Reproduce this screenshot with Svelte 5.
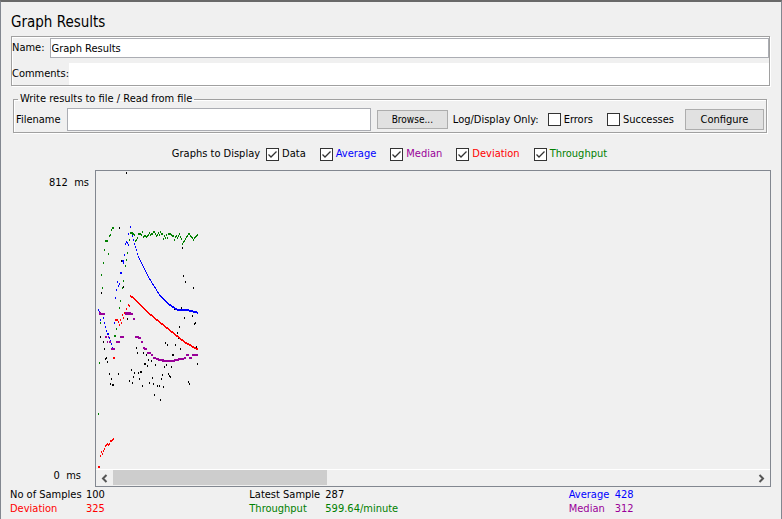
<script lang="ts">
	type Mark = [x: number, y: number, width?: number];

	interface Series {
		id: string;
		label: string;
		marks: Mark[];
	}

	// fills in one mark per pixel column between the given points
	function curve(points: Mark[]): Mark[] {
		const marks: Mark[] = [];
		for (let i = 1; i < points.length; i++) {
			const [x0, y0] = points[i - 1];
			const [x1, y1] = points[i];
			for (let x = x0; x < x1; x++) {
				marks.push([x, Math.round(y0 + ((y1 - y0) * (x - x0)) / (x1 - x0))]);
			}
		}
		return marks;
	}

	// one throughput sample per pixel column, starting at x = 48
	const throughputTail = [
		65, 65, 66, 65, 64, 62, 64, 63, 63, 61, 61, 63, 65, 64, 62, 64, 61, 63, 63, 68, 65, 67, 64, 67, 63, 63, 63,
		64, 65, 65, 69, 66, 65, 67, 65, 63, 66, 68, 73, 71, 70, 68, 66, 65, 63, 63, 65, 66, 67, 69, 67, 66, 65, 64
	];

	const series: Series[] = [
		{
			id: 'data',
			label: 'Data',
			marks: [
				[30, 2], [23, 57], [86, 77], [87, 105], [89, 111], [97, 117], [5, 122], [25, 90], [27, 116],
				[31, 148], [4, 166], [7, 171], [8, 178], [10, 187], [9, 188], [11, 191], [40, 177], [41, 182],
				[47, 182], [50, 184], [48, 193, 2], [51, 195], [35, 199], [38, 202], [42, 202], [44, 201, 2],
				[37, 206], [43, 208], [33, 210], [36, 212], [46, 215], [22, 203], [13, 203], [15, 208], [14, 213],
				[16, 214, 2], [78, 138], [85, 137], [67, 154], [88, 147], [96, 145], [99, 152], [98, 153],
				[83, 156], [81, 162], [82, 167], [92, 173], [100, 176], [69, 172], [71, 174], [79, 174], [84, 178],
				[76, 184, 2], [101, 193], [75, 196], [70, 194], [68, 196], [59, 194], [55, 190], [52, 189],
				[72, 203], [73, 205], [74, 206], [65, 208], [66, 204], [56, 207], [53, 212], [57, 213], [61, 215],
				[63, 215], [67, 216], [58, 224], [64, 229], [92, 211], [93, 213]
			]
		},
		{
			id: 'average',
			label: 'Average',
			marks: [
				[34, 56], [32, 63], [36, 65], [37, 69], [30, 71], [29, 73], [31, 72], [32, 74], [28, 84],
				[26, 90, 2], [27, 92], [24, 102, 2], [21, 111], [23, 113], [22, 115], [20, 119], [19, 127],
				[2, 139], [3, 141], [7, 147], [4, 149], [8, 152], [9, 156], [10, 160], [11, 163, 2], [13, 167],
				[14, 170], [15, 173], [16, 177], [18, 152],
				...curve([
					[38, 73], [40, 79], [41, 83], [43, 88], [45, 92], [47, 96], [49, 100], [51, 104], [55, 111],
					[60, 119], [63, 124], [66, 127], [69, 130], [72, 133], [75, 135], [78, 137], [82, 139],
					[91, 139], [95, 140], [99, 141], [102, 142]
				])
			]
		},
		{
			id: 'median',
			label: 'Median',
			marks: [
				[3, 142, 2], [3, 143, 6], [28, 142, 7], [29, 143, 8], [37, 148, 2], [9, 166, 2], [12, 166],
				[13, 171, 2], [11, 171], [15, 178, 4], [24, 166, 4], [20, 171, 4], [39, 166, 4], [42, 167, 3],
				[45, 171, 2], [47, 177, 2], [48, 178, 3], [51, 182, 4], [55, 184, 2], [57, 187, 3], [60, 188, 3],
				[62, 189, 6], [66, 190, 10], [76, 190, 3], [78, 189, 5], [82, 188, 4], [86, 188, 2], [88, 187, 2],
				[90, 184, 3], [93, 187, 3], [96, 184, 6]
			]
		},
		{
			id: 'deviation',
			label: 'Deviation',
			marks: [
				[30, 138], [32, 134], [33, 135], [28, 142], [26, 144], [27, 147], [24, 149], [19, 149, 3],
				[22, 151], [25, 152], [23, 154], [17, 187, 2], [2, 296, 2], [4, 285], [5, 281], [6, 283], [7, 280],
				[8, 278], [9, 275], [10, 274], [11, 273], [12, 274], [13, 273], [14, 270], [15, 270], [16, 269],
				[17, 268],
				...curve([[34, 125], [36, 126], [51, 141], [63, 151], [78, 163], [88, 171], [102, 179]])
			]
		},
		{
			id: 'throughput',
			label: 'Throughput',
			marks: [
				[16, 57, 2], [15, 59], [14, 64], [13, 65], [9, 70, 3], [8, 79], [12, 83], [7, 92], [5, 104],
				[6, 117], [34, 62, 3], [36, 63], [37, 63], [38, 64], [33, 69], [41, 67], [40, 69], [39, 70],
				[42, 63, 3], [45, 64], [46, 61], [47, 66], [31, 82], [30, 89], [29, 95], [27, 110], [26, 117],
				[24, 130], [23, 137], [4, 152], [20, 158], [18, 165, 2], [3, 192], [2, 243],
				...throughputTail.map((y, i): Mark => [48 + i, y])
			]
		}
	];

	const stats = [
		{ id: 'data', label: 'No of Samples', value: '100' },
		{ id: 'data', label: 'Latest Sample', value: '287' },
		{ id: 'average', label: 'Average', value: '428' },
		{ id: 'deviation', label: 'Deviation', value: '325' },
		{ id: 'throughput', label: 'Throughput', value: '599.64/minute' },
		{ id: 'median', label: 'Median', value: '312' }
	];

	let name = $state('Graph Results');
	let comments = $state('');
	let filename = $state('');
	let errorsOnly = $state(false);
	let successesOnly = $state(false);
	let visible: Record<string, boolean> = $state({
		data: true,
		average: true,
		median: true,
		deviation: true,
		throughput: true
	});
</script>

<main class="panel">
	<h1>Graph Results</h1>

	<div class="naming etched">
		<div class="field">
			<label for="name">Name:</label>
			<input id="name" class="name" type="text" bind:value={name} />
		</div>
		<div class="field">
			<label for="comments">Comments:</label>
			<input id="comments" class="comments" type="text" bind:value={comments} />
		</div>
	</div>

	<fieldset class="etched">
		<legend>Write results to file / Read from file</legend>
		<div class="file">
			<label for="filename">Filename</label>
			<input id="filename" class="filename" type="text" bind:value={filename} />
			<button type="button" class="browse">Browse...</button>
			<span class="only">Log/Display Only:</span>
			<label class="check errors"><input type="checkbox" bind:checked={errorsOnly} />Errors</label>
			<label class="check"><input type="checkbox" bind:checked={successesOnly} />Successes</label>
			<button type="button" class="configure">Configure</button>
		</div>
	</fieldset>

	<div class="toggles">
		<span>Graphs to Display</span>
		{#each series as s (s.id)}
			<label class="check {s.id}"><input type="checkbox" bind:checked={visible[s.id]} />{s.label}</label>
		{/each}
	</div>

	<div class="graph">
		<div class="axis">
			<span>812&nbsp; ms</span>
			<span class="zero">0&nbsp; ms</span>
		</div>
		<div class="viewport">
			<svg class="plot" shape-rendering="crispEdges" role="img" aria-label="Response times">
				{#each series as s (s.id)}
					{#if visible[s.id]}
						<g class={s.id}>
							{#each s.marks as [x, y, width = 1]}
								<rect {x} y={y - 1} {width} height="2" />
							{/each}
						</g>
					{/if}
				{/each}
			</svg>
			<div class="scrollbar">
				<button type="button" aria-label="Scroll left">
					<svg width="7" height="9" viewBox="0 0 7 9"><path d="M5.5 1 2 4.5 5.5 8" /></svg>
				</button>
				<div class="track"><div class="thumb"></div></div>
				<button type="button" aria-label="Scroll right">
					<svg width="7" height="9" viewBox="0 0 7 9"><path d="M1.5 1 5 4.5 1.5 8" /></svg>
				</button>
			</div>
		</div>
	</div>

	<dl class="stats">
		{#each stats as stat}
			<div class={stat.id}>
				<dt>{stat.label}</dt>
				<dd>{stat.value}</dd>
			</div>
		{/each}
	</dl>
</main>

<style>
	:global(body) {
		background: #f0f0f0;
	}
	.panel {
		box-sizing: border-box;
		min-height: 100vh;
		border: 1px solid #828790;
		border-top: 2px solid #696969;
		border-bottom: 0;
		padding: 10px 10px 0;
		background: #f0f0f0;
		color: #000;
		font-family: 'DejaVu Sans Condensed', 'DejaVu Sans', sans-serif;
		font-size: 11px;
		line-height: 14px;
		white-space: nowrap;
	}
	h1 {
		margin: 0 0 4px;
		font-size: 15px;
		font-weight: 400;
		line-height: 20px;
	}
	input,
	button {
		box-sizing: border-box;
		margin: 0;
		font: inherit;
		color: inherit;
		border-radius: 0;
	}
	input[type='text'] {
		flex: 1;
		min-width: 0;
		padding: 0 1px;
		background: #fff;
		border: 1px solid #abadb3;
	}
	button {
		padding: 0;
		background: #e1e1e1;
		border: 1px solid #adadad;
	}
	.etched {
		border: 1px solid #a0a0a0;
		box-shadow:
			1px 1px 0 #fff,
			inset 1px 1px 0 #fff;
	}
	.naming {
		display: grid;
		gap: 5px;
		margin-right: 1px;
		padding-top: 1px;
	}
	.field {
		display: flex;
		align-items: center;
	}
	.field label {
		padding-right: 5px;
	}
	.field label[for='comments'] {
		padding-right: 0;
	}
	.name {
		height: 20px;
	}
	input.comments {
		height: 22px;
		border: 0;
	}
	fieldset {
		min-width: 0;
		margin: 6px 4px 0 2px;
		padding: 0 2px 1px;
	}
	legend {
		margin-left: 2px;
		padding: 0 2px;
	}
	.file {
		display: flex;
		align-items: center;
		padding-top: 2px;
	}
	.filename {
		height: 23px;
		margin: 0 6px;
	}
	.browse {
		width: 71px;
		height: 19px;
		font-size: 10px;
	}
	.only {
		margin: 0 9px 0 5px;
	}
	.errors {
		margin-right: 14px;
	}
	.configure {
		width: 79px;
		height: 21px;
		margin-left: 11px;
	}
	.check {
		display: flex;
		align-items: center;
		gap: 3px;
	}
	.check input {
		appearance: none;
		width: 13px;
		height: 13px;
		background: #fff;
		border: 1px solid #333;
	}
	.check input:checked {
		background: #fff
			url("data:image/svg+xml,%3Csvg xmlns='http://www.w3.org/2000/svg' viewBox='0 0 11 11'%3E%3Cpath d='M1.5 5.5 4 8 9.5 2.5' fill='none' stroke='%23333' stroke-width='1.3'/%3E%3C/svg%3E")
			center / 11px no-repeat;
	}
	.toggles {
		display: flex;
		justify-content: center;
		gap: 14px;
		margin-top: 14px;
		padding-right: 3px;
	}
	.toggles > span {
		margin-right: -8px;
	}
	.graph {
		display: flex;
		margin-top: 9px;
	}
	.axis {
		display: flex;
		flex-direction: column;
		justify-content: space-between;
		align-items: flex-end;
		box-sizing: border-box;
		width: 84px;
		padding: 6px 6px 4px 0;
	}
	.zero {
		padding-right: 8px;
	}
	.viewport {
		flex: 1;
		min-width: 0;
		border: 1px solid #828790;
	}
	.plot {
		display: block;
		width: 100%;
		height: 298px;
	}
	.plot rect {
		fill: currentColor;
	}
	.scrollbar {
		display: flex;
		height: 16px;
		border-top: 1px solid #fff;
	}
	.scrollbar button {
		display: flex;
		align-items: center;
		justify-content: center;
		width: 17px;
		background: none;
		border: 0;
	}
	.scrollbar path {
		fill: none;
		stroke: #555;
		stroke-width: 2;
	}
	.track {
		flex: 1;
	}
	.thumb {
		width: 33.4%;
		height: 15px;
		background: #cdcdcd;
	}
	.stats {
		display: grid;
		grid-template-columns: 239fr 319fr 202fr;
		margin: 1px 0 0 -1px;
	}
	.stats div {
		display: flex;
	}
	dt {
		width: 76px;
	}
	.stats div:nth-child(3n) dt {
		width: 46px;
	}
	dd {
		margin: 0;
	}
	.average {
		color: #00f;
	}
	.median {
		color: #909;
	}
	.deviation {
		color: #f00;
	}
	.throughput {
		color: #008000;
	}
</style>
